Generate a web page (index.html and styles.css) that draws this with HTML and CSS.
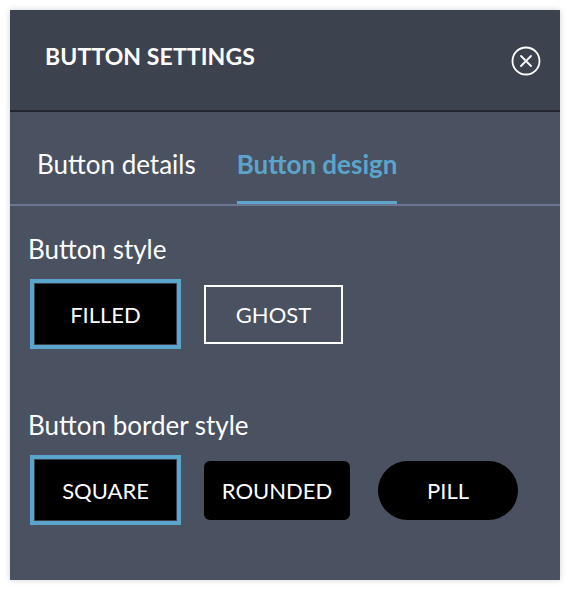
FILE: index.html
```html
<!DOCTYPE html>
<html>
<head>
<meta charset="utf-8">
<link rel="stylesheet" href="styles.css">
</head>
<body>
<div class="panel">
  <header class="head">
    <h1 class="title">BUTTON SETTINGS</h1>
    <button class="close" aria-label="Close">
      <svg width="30" height="30" viewBox="0 0 30 30">
        <circle cx="15" cy="15" r="13.5" fill="none" stroke="#fff" stroke-width="1.8"/>
        <path d="M10 10 L20 20 M20 10 L10 20" stroke="#fff" stroke-width="1.8" stroke-linecap="round"/>
      </svg>
    </button>
  </header>
  <nav class="tabs">
    <span class="tab">Button details</span>
    <span class="tab active">Button design</span>
  </nav>
  <div class="content">
    <section class="group">
      <h2 class="label">Button style</h2>
      <div class="row">
        <button class="opt filled selected w141">FILLED</button>
        <button class="opt ghost w139">GHOST</button>
      </div>
    </section>
    <section class="group second">
      <h2 class="label">Button border style</h2>
      <div class="row">
        <button class="opt filled selected w141">SQUARE</button>
        <button class="opt filled rounded w146">ROUNDED</button>
        <button class="opt filled pill w140">PILL</button>
      </div>
    </section>
  </div>
</div>
</body>
</html>
```

FILE: styles.css
```css
* { box-sizing: border-box; }
html, body { margin: 0; padding: 0; background: #ffffff; }
body { padding: 10px; font-family: Lato, "Open Sans", sans-serif; }

.panel {
  width: 550px;
  height: 570px;
  background: #4a5161;
  box-shadow: 0 0 6px rgba(0,0,0,0.18);
  display: flex;
  flex-direction: column;
}

.head {
  height: 102px;
  background: #3d424f;
  border-bottom: 2px solid #23262c;
  display: flex;
  align-items: flex-start;
  justify-content: space-between;
  padding: 0 19px 0 35px;
}
.title {
  margin: 32px 0 0;
  font-size: 23px;
  font-weight: 700;
  color: #fff;
  line-height: 28px;
  letter-spacing: 0.1px;
}
.close {
  margin-top: 36px;
  background: none;
  border: 0;
  padding: 0;
  width: 30px;
  height: 30px;
  display: flex;
}

.tabs {
  display: flex;
  gap: 41px;
  padding: 0 0 0 27px;
  border-bottom: 2px solid #6c7591;
  height: 94px;
  align-items: flex-end;
}
.tab {
  font-size: 26px;
  color: #fff;
  line-height: 32px;
  padding-bottom: 21px;
  border-bottom: 3px solid transparent;
}
.tab.active {
  color: #5ba5cc;
  font-weight: 700;
  border-bottom-color: #5ba5cc;
}

.content {
  padding: 28px 20px 0 18px;
}
.group.second { margin-top: 66px; }
.label {
  margin: 0;
  font-size: 26px;
  font-weight: 400;
  line-height: 30px;
  color: #fff;
}
.row {
  display: flex;
  gap: 28px;
  margin-top: 20px;
  padding-left: 7px;
  align-items: center;
}
.opt {
  height: 59px;
  font-family: Lato, "Open Sans", sans-serif;
  font-size: 22px;
  color: #fff;
  padding: 0;
  cursor: pointer;
}
.filled { background: #000; border: 0; }
.ghost { background: transparent; border: 2px solid #fff; }
.selected {
  height: 60px;
  box-shadow: 0 0 0 1px #3a3e49, 0 0 0 5px #5ba5cc;
}
.rounded { border-radius: 6px; }
.pill { border-radius: 30px; }
.w139 { width: 139px; }
.w140 { width: 140px; }
.w141 { width: 141px; }
.w146 { width: 146px; }
```
